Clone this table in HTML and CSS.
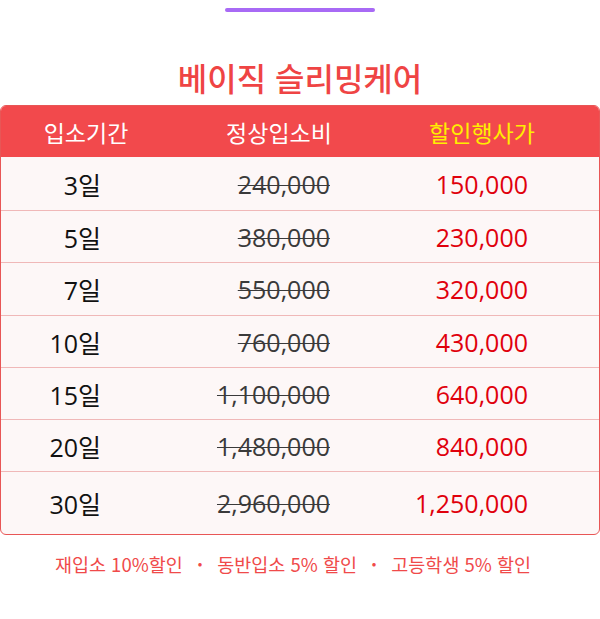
FILE: index.html
```html
<!DOCTYPE html>
<html lang="ko">
<head>
<meta charset="utf-8">
<link rel="stylesheet" href="styles.css">
</head>
<body>
<div class="page">
  <div class="topbar"></div>
  <h1 class="title">베이직 슬리밍케어</h1>
  <div class="table">
    <div class="row head">
      <div class="c1">입소기간</div>
      <div class="c2">정상입소비</div>
      <div class="c3 hl">할인행사가</div>
    </div>
    <div class="row first"><div class="c1">3일</div><div class="c2"><s>240,000</s></div><div class="c3">150,000</div></div>
    <div class="row"><div class="c1">5일</div><div class="c2"><s>380,000</s></div><div class="c3">230,000</div></div>
    <div class="row tall"><div class="c1">7일</div><div class="c2"><s>550,000</s></div><div class="c3">320,000</div></div>
    <div class="row"><div class="c1">10일</div><div class="c2"><s>760,000</s></div><div class="c3">430,000</div></div>
    <div class="row"><div class="c1">15일</div><div class="c2"><s>1,100,000</s></div><div class="c3">640,000</div></div>
    <div class="row"><div class="c1">20일</div><div class="c2"><s>1,480,000</s></div><div class="c3">840,000</div></div>
    <div class="row last"><div class="c1">30일</div><div class="c2"><s>2,960,000</s></div><div class="c3">1,250,000</div></div>
  </div>
  <p class="note">재입소 10%할인 <span class="dot">·</span> 동반입소 5% 할인 <span class="dot">·</span> 고등학생 5% 할인</p>
</div>
</body>
</html>
```
FILE: styles.css
```css
html, body { margin: 0; padding: 0; background: #fff; }
body { font-family: "Open Sans", "Noto Sans CJK KR", sans-serif; }
.page { width: 600px; display: flex; flex-direction: column; align-items: center; }
.topbar { width: 150px; height: 4px; border-radius: 2px; background: #a86af5; margin-top: 8px; }
.title {
  margin: 37px 0 0; font-family: "Noto Sans CJK KR", sans-serif; font-weight: 500;
  font-size: 32px; line-height: 56px; color: #ef4444; letter-spacing: 0;
}
.table {
  width: 600px; box-sizing: border-box; margin-top: 0;
  border: 1px solid #e85656; border-radius: 6px; overflow: hidden; background: #fdf7f7;
}
.row {
  display: grid; grid-template-columns: 200px 200px 200px; height: 51px; align-items: center;
  border-bottom: 1px solid #f0b8b8; font-size: 25px; color: #111;
}
.row.first { height: 53px; }
.row.tall { height: 52px; }
.row.last { border-bottom: 0; height: 62px; }
.row.head { background: #f2494c; color: #fff; border-bottom: 0; height: 51px; font-family: "Noto Sans CJK KR", sans-serif; font-size: 23px; }
.row .c1 { text-align: right; padding-right: 100px; }
.row .c2 { text-align: right; padding-right: 71px; color: #3a3a3a; }
.row .c3 { text-align: right; padding-right: 73px; color: #e0000c; }
.row.head .c1 { text-align: center; padding: 0 30px 0 0; }
.row.head .c2 { text-align: center; padding: 0 44px 0 0; color: #fff; }
.row.head .c3 { text-align: center; padding: 0 38px 0 0; color: #ffee00; }
s { text-decoration-thickness: 1px; }
.note {
  margin: 16px 14px 0 0; font-family: "Noto Sans CJK KR", sans-serif; font-size: 18.5px; color: #f04a4a;
}
.dot { margin: 0 9px; font-weight: 700; }
```
